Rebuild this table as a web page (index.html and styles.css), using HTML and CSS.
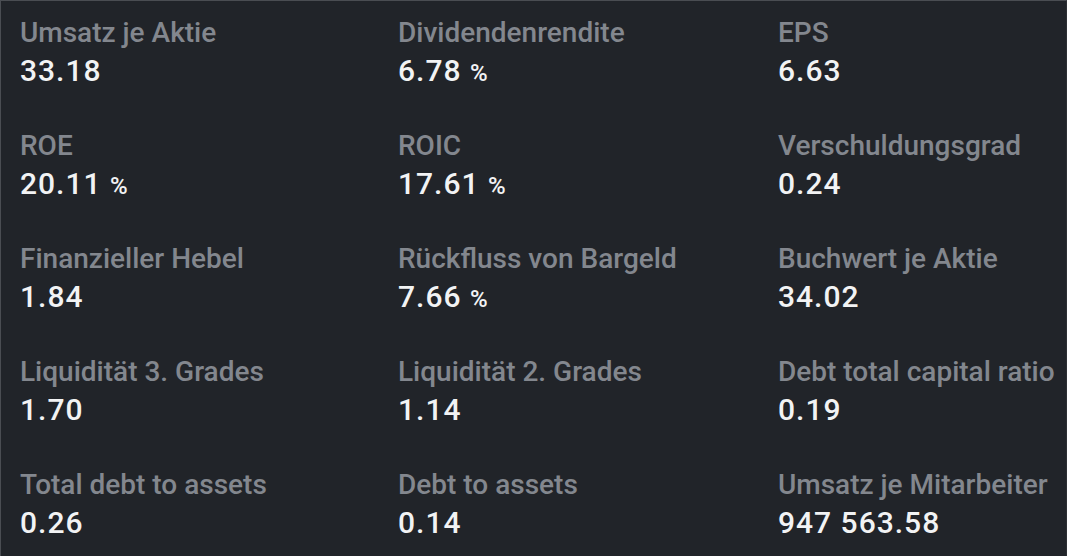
FILE: index.html
```html
<!DOCTYPE html>
<html>
<head>
<meta charset="utf-8">
<link rel="stylesheet" href="styles.css">
</head>
<body>
<div class="panel">
  <div class="grid">
    <div class="item"><div class="label">Umsatz je Aktie</div><div class="value">33.18</div></div>
    <div class="item"><div class="label">Dividendenrendite</div><div class="value">6.78 <span class="pct">%</span></div></div>
    <div class="item"><div class="label">EPS</div><div class="value">6.63</div></div>
    <div class="item"><div class="label">ROE</div><div class="value">20.11 <span class="pct">%</span></div></div>
    <div class="item"><div class="label">ROIC</div><div class="value">17.61 <span class="pct">%</span></div></div>
    <div class="item"><div class="label">Verschuldungsgrad</div><div class="value">0.24</div></div>
    <div class="item"><div class="label">Finanzieller Hebel</div><div class="value">1.84</div></div>
    <div class="item"><div class="label">Rückfluss von Bargeld</div><div class="value">7.66 <span class="pct">%</span></div></div>
    <div class="item"><div class="label">Buchwert je Aktie</div><div class="value">34.02</div></div>
    <div class="item"><div class="label">Liquidität 3. Grades</div><div class="value">1.70</div></div>
    <div class="item"><div class="label">Liquidität 2. Grades</div><div class="value">1.14</div></div>
    <div class="item"><div class="label">Debt total capital ratio</div><div class="value">0.19</div></div>
    <div class="item"><div class="label">Total debt to assets</div><div class="value">0.26</div></div>
    <div class="item"><div class="label">Debt to assets</div><div class="value">0.14</div></div>
    <div class="item"><div class="label">Umsatz je Mitarbeiter</div><div class="value">947 563.58</div></div>
  </div>
</div>
</body>
</html>
```

FILE: styles.css
```css
html, body {
  margin: 0;
  padding: 0;
  background: #212429;
}
.panel {
  width: 1067px;
  height: 556px;
  box-sizing: border-box;
  background: #212429;
  border-top: 1px solid #4a4d52;
  border-left: 1px solid #4a4d52;
  border-right: 1px solid #2c2f34;
  padding: 14px 0 0 19px;
  font-family: Roboto, "Liberation Sans", sans-serif;
  overflow: hidden;
}
.grid {
  display: grid;
  grid-template-columns: 378px 380px 1fr;
  row-gap: 37px;
}
.label {
  color: #83878e;
  font-size: 28px;
  font-weight: 500;
  line-height: 36px;
  white-space: nowrap;
}
.value {
  color: #f2f3f4;
  font-size: 30px;
  font-weight: 500;
  letter-spacing: 1px;
  line-height: 40px;
  white-space: nowrap;
}
.pct {
  font-size: 24px;
  line-height: 1;
  letter-spacing: 0;
}
```
